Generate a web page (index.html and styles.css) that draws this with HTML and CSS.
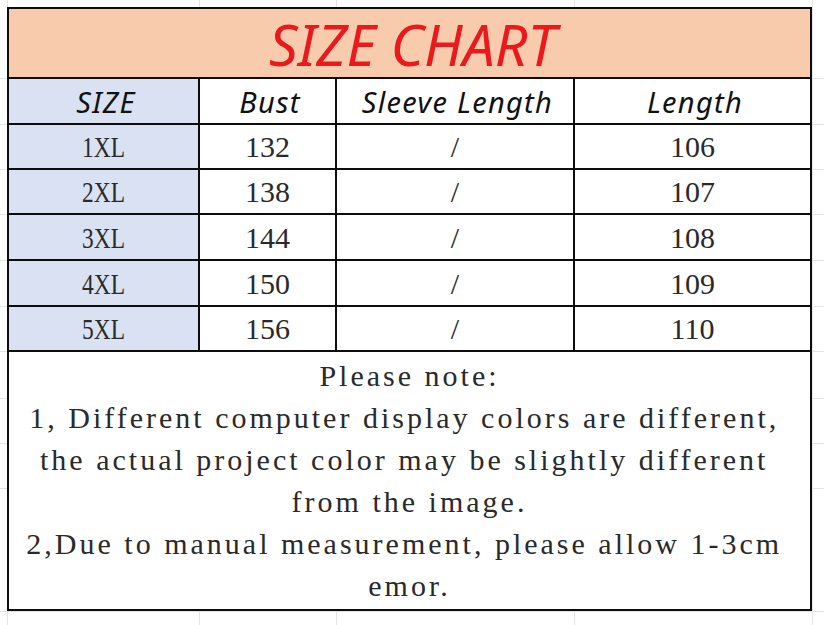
FILE: index.html
```html
<!DOCTYPE html>
<html lang="en">
<head>
<meta charset="utf-8">
<title>Size Chart</title>
<link rel="stylesheet" href="styles.css">
</head>
<body>
<div class="page">
  <div class="chart">
    <div class="cell title">SIZE CHART</div>

    <div class="cell head size-col">SIZE</div>
    <div class="cell head">Bust</div>
    <div class="cell head">Sleeve Length</div>
    <div class="cell head">Length</div>

    <div class="cell size-col"><span class="num narrow">1XL</span></div>
    <div class="cell"><span class="num">132</span></div>
    <div class="cell"><span class="num">/</span></div>
    <div class="cell"><span class="num">106</span></div>

    <div class="cell size-col"><span class="num narrow">2XL</span></div>
    <div class="cell"><span class="num">138</span></div>
    <div class="cell"><span class="num">/</span></div>
    <div class="cell"><span class="num">107</span></div>

    <div class="cell size-col"><span class="num narrow">3XL</span></div>
    <div class="cell"><span class="num">144</span></div>
    <div class="cell"><span class="num">/</span></div>
    <div class="cell"><span class="num">108</span></div>

    <div class="cell size-col"><span class="num narrow">4XL</span></div>
    <div class="cell"><span class="num">150</span></div>
    <div class="cell"><span class="num">/</span></div>
    <div class="cell"><span class="num">109</span></div>

    <div class="cell size-col"><span class="num narrow">5XL</span></div>
    <div class="cell"><span class="num">156</span></div>
    <div class="cell"><span class="num">/</span></div>
    <div class="cell"><span class="num">110</span></div>

    <div class="cell note">
      <span class="line">Please note:</span>
      <span class="line">1, Different computer display colors are different,&nbsp;</span>
      <span class="line">the actual project color may be slightly different&nbsp;</span>
      <span class="line">from the image.</span>
      <span class="line">2,Due to manual measurement, please allow 1-3cm&nbsp;</span>
      <span class="line">emor.</span>
    </div>
  </div>
</div>
</body>
</html>
```

FILE: styles.css
```css
html, body {
  margin: 0;
  padding: 0;
}

body {
  width: 824px;
  height: 625px;
  overflow: hidden;
  background-color: #ffffff;
  background-image:
    linear-gradient(#e4e4e4, #e4e4e4),
    linear-gradient(#e4e4e4, #e4e4e4),
    linear-gradient(#e4e4e4, #e4e4e4),
    linear-gradient(#e4e4e4, #e4e4e4),
    linear-gradient(#e4e4e4, #e4e4e4),
    linear-gradient(#e4e4e4, #e4e4e4),
    linear-gradient(#e4e4e4, #e4e4e4),
    linear-gradient(#e4e4e4, #e4e4e4),
    linear-gradient(#e4e4e4, #e4e4e4),
    linear-gradient(#e4e4e4, #e4e4e4),
    linear-gradient(#e4e4e4, #e4e4e4),
    linear-gradient(#e4e4e4, #e4e4e4),
    linear-gradient(#e4e4e4, #e4e4e4),
    linear-gradient(#e4e4e4, #e4e4e4),
    linear-gradient(#e4e4e4, #e4e4e4),
    linear-gradient(#e4e4e4, #e4e4e4);
  background-repeat: no-repeat;
  background-size:
    1px 100%, 1px 100%, 1px 100%, 1px 100%, 1px 100%,
    100% 1px, 100% 1px, 100% 1px, 100% 1px, 100% 1px, 100% 1px,
    100% 1px, 100% 1px, 100% 1px, 100% 1px, 100% 1px;
  background-position:
    7px 0, 199px 0, 336px 0, 574px 0, 812px 0,
    0 78px, 0 124px, 0 169px, 0 214px, 0 260px, 0 306px,
    0 351px, 0 398px, 0 443px, 0 488px, 0 611px;
}

.page {
  padding: 7px 0 0 7px;
}

.chart {
  display: grid;
  width: max-content;
  grid-template-columns: 189px 135px 236px 235px;
  grid-template-rows: 68px 44px 43px 43px 44px 44px 43px 257px;
  gap: 2px;
  padding: 2px;
  background: #0d0d0d;
}

.cell {
  background: #ffffff;
  display: flex;
  align-items: center;
  justify-content: center;
  color: #111111;
  overflow: visible;
}

.title {
  grid-column: 1 / -1;
  background: #f8cbad;
  color: #ea1a1c;
  font-family: "Noto Sans", "Open Sans", sans-serif;
  font-style: italic;
  font-size: 57px;
  padding-left: 6px;
  padding-top: 1px;
}

.head {
  font-family: "Noto Sans", "Open Sans", sans-serif;
  font-style: italic;
  font-size: 29px;
  letter-spacing: 1.3px;
  padding-top: 1px;
  padding-left: 5px;
}

.size-col {
  background: #d9e1f2;
}

.num {
  display: inline-block;
  font-family: "Liberation Serif", "Times New Roman", serif;
  font-size: 30px;
  white-space: nowrap;
  color: #2a2a2a;
  padding-top: 1px;
}

.narrow {
  transform: scaleX(0.78);
}

.note {
  grid-column: 1 / -1;
  flex-direction: column;
  font-family: "Liberation Serif", "Times New Roman", serif;
  font-size: 30px;
  letter-spacing: 3px;
  color: #2a2a2a;
}

.note .line {
  line-height: 42px;
  white-space: nowrap;
}
```
